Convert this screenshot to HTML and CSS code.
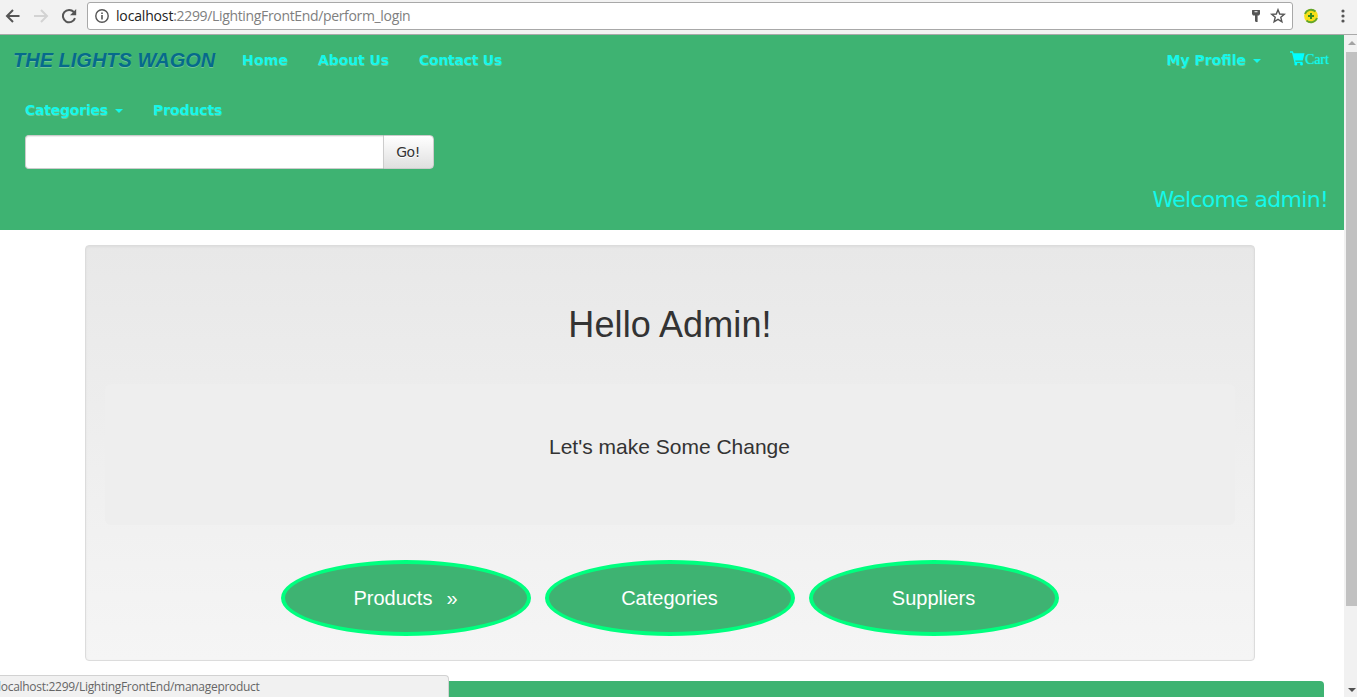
FILE: index.html
```html
<!DOCTYPE html>
<html lang="en">
<head>
<meta charset="utf-8">
<title>The Lights Wagon</title>
<link rel="stylesheet" href="styles.css">
</head>
<body>
<div class="toolbar">
  <svg class="tool back" width="16" height="16" viewBox="0 0 16 16"><path d="M14.5 8H2M8 2L2 8l6 6" fill="none" stroke="#555" stroke-width="2"/></svg>
  <svg class="tool forward" width="16" height="16" viewBox="0 0 16 16"><path d="M1 8h12.5M8 2l6 6-6 6" fill="none" stroke="#d3d3d3" stroke-width="2"/></svg>
  <svg class="tool reload" width="16" height="16" viewBox="0 0 16 16"><path d="M14 10.2A6.200 6.200 0 1 1 12.800 4" fill="none" stroke="#555" stroke-width="2"/><path d="M15.200 1v6.200H9z" fill="#555"/></svg>
  <div class="address">
    <svg class="info" width="14" height="14" viewBox="0 0 14 14"><circle cx="7" cy="7" r="6.2" fill="none" stroke="#555" stroke-width="1.4"/><path d="M6.2 6h1.6v4.5H6.2zM6.2 3.4h1.6V5H6.2z" fill="#555"/></svg>
    <span class="url"><b>localhost</b>:2299/LightingFrontEnd/perform_login</span>
    <svg class="key" width="10" height="14" viewBox="0 0 10 14"><path d="M1.5 1h7q.5 0 .5.5V5L8 6.500H6.600V13H5l-1-.8V6.500H2L1 5V1.500q0-.5.500-.5zM3.500 2.300v1h3v-1z" fill="#555" fill-rule="evenodd"/></svg>
    <svg class="star" width="16" height="16" viewBox="0 0 16 16"><path d="M8 1.700l1.700 4.300 4.600.3-3.500 3 1.100 4.500L8 11.300l-3.900 2.500 1.100-4.500-3.500-3 4.600-.3z" fill="none" stroke="#555" stroke-width="1.400"/></svg>
  </div>
  <svg class="extension" width="16" height="16" viewBox="0 0 16 16"><circle cx="8" cy="8" r="6.900" fill="#f7e018"/><path d="M2 6A6.500 6.500 0 0 1 12.500 3.500M14 10A6.500 6.500 0 0 1 3.500 12.500" fill="none" stroke="#62a52c" stroke-width="1.800"/><path d="M8 5v6M5 8h6" stroke="#398c20" stroke-width="2"/></svg>
  <svg class="more" width="4" height="14" viewBox="0 0 4 14"><g fill="#555"><circle cx="2" cy="2" r="1.600"/><circle cx="2" cy="7" r="1.600"/><circle cx="2" cy="12" r="1.600"/></g></svg>
</div>
<div class="viewport">
  <main class="page">
    <header class="navbar">
      <nav class="row">
        <a class="brand">THE LIGHTS WAGON</a>
        <a class="link home">Home</a>
        <a class="link about">About Us</a>
        <a class="link contact">Contact Us</a>
        <a class="link profile">My Profile<i class="caret"></i></a>
        <a class="cart"><svg class="cart-icon" width="15" height="15" viewBox="0 0 15 15"><path d="M0 .3h2.800l.8 1.900H14.500L12.800 9.500H5.200l.4 1.300H12.500V12H4.500L2 1.700H0z" fill="#0ff"/><circle cx="5.800" cy="13" r="1.500" fill="#0ff"/><circle cx="11.500" cy="13" r="1.500" fill="#0ff"/></svg>Cart</a>
      </nav>
      <nav class="row second">
        <a class="link categories">Categories<i class="caret"></i></a>
        <a class="link products">Products</a>
      </nav>
      <form class="search"><input class="field" type="text"><button class="go" type="button">Go!</button></form>
      <div class="welcome">Welcome admin!</div>
    </header>
    <section class="panel">
      <h1 class="title">Hello Admin!</h1>
      <div class="jumbo">Let's make Some Change</div>
      <div class="actions">
        <a class="oval"><span>Products</span><span class="raquo">»</span></a>
        <a class="oval">Categories</a>
        <a class="oval">Suppliers</a>
      </div>
    </section>
    <footer class="footer"></footer>
  </main>
  <div class="scrollbar"><i class="up"></i><i class="thumb"></i><i class="down"></i></div>
</div>
<div class="status">localhost:2299/LightingFrontEnd/manageproduct</div>
</body>
</html>
```
FILE: styles.css
```css
* { box-sizing: border-box; }
body { margin: 0; width: 1357px; height: 697px; overflow: hidden; background: #fff; font-family: "Liberation Sans", Arial, sans-serif; color: #333; }
svg { display: block; flex: none; }
.toolbar { display: flex; align-items: center; height: 35px; padding: 0 12px 3px 5px; background: #f2f2f2; border-bottom: 1px solid #a9a9a9; }
.forward { margin-left: 12px; }
.reload { margin-left: 12px; }
.address { display: flex; align-items: center; width: 1206px; height: 28px; margin-left: 10px; padding: 0 6px 0 7px; background: #fff; border: 1px solid #a8a8a8; border-radius: 3px; }
.url { margin-left: 7px; font: 14px/20px "Open Sans", sans-serif; letter-spacing: -.34px; color: #808080; white-space: nowrap; }
.url b { font-weight: 400; letter-spacing: -.16px; color: #222; }
.key { margin-left: auto; }
.star { margin-left: 9px; }
.extension { margin-left: 10px; }
.more { margin-left: auto; }
.viewport { display: flex; height: 662px; }
.page { flex: none; width: 1344px; overflow: hidden; }
.navbar { height: 195px; background: #3eb372; color: #14f8ea; }
.row { display: flex; align-items: center; height: 50px; padding: 0 15px 0 13px; }
.second { padding-left: 25px; }
.brand { width: 229px; font-size: 20px; font-weight: 700; font-style: italic; color: #066a8b; text-shadow: 0 1px 0 rgba(255,255,255,.25); white-space: nowrap; }
.link { font: 700 14px/20px "DejaVu Sans", Verdana, sans-serif; text-shadow: 0 1px 0 rgba(255,255,255,.25); white-space: nowrap; }
.home { width: 76px; letter-spacing: .2px; }
.about { width: 101px; letter-spacing: -.1px; }
.contact { letter-spacing: -.25px; }
.profile { margin-left: auto; }
.caret { display: inline-block; margin-left: 7px; vertical-align: middle; border: 4px solid transparent; border-top-color: currentColor; border-bottom: 0; }
.cart { display: flex; align-items: center; width: 39px; margin-left: 29px; font: 14px/20px "Liberation Serif", serif; letter-spacing: -.1px; text-shadow: 0 0 1px #14f8ea; }
.cart-icon { margin-top: -3px; }
.categories { width: 128px; letter-spacing: -.22px; }
.products { letter-spacing: -.1px; }
.search { display: flex; width: 409px; height: 34px; margin-left: 25px; }
.field { width: 358px; height: 34px; padding: 6px 12px; background: #fff; border: 1px solid #ccc; border-right: 0; border-radius: 4px 0 0 4px; box-shadow: inset 0 1px 1px rgba(0,0,0,.075); }
.go { width: 51px; height: 34px; padding: 0 1px 0 0; font: 14px/20px "DejaVu Sans", Verdana, sans-serif; letter-spacing: -.5px; color: #333; background: linear-gradient(#fff, #e0e0e0); border: 1px solid #ccc; border-radius: 0 4px 4px 0; text-shadow: 0 1px 0 #fff; }
.welcome { display: flex; justify-content: flex-end; align-items: center; height: 61px; padding: 1px 16px 0 0; font: 22px/30px "DejaVu Sans", Verdana, sans-serif; letter-spacing: -.7px; white-space: nowrap; }
.panel { width: 1170px; height: 416px; margin: 15px 0 0 85px; padding: 19px; border: 1px solid #dcdcdc; border-radius: 4px; background: linear-gradient(#e8e8e8, #f5f5f5); box-shadow: inset 0 1px 3px rgba(0,0,0,.05); text-align: center; }
.title { height: 119px; margin: 0; padding-top: 40px; font-size: 36px; font-weight: 400; line-height: 40px; letter-spacing: .1px; }
.jumbo { height: 141px; padding: 48px 1px 0 0; border-radius: 6px; background: #eee; font-size: 21px; line-height: 30px; }
.actions { display: flex; justify-content: center; gap: 14px; margin-top: 35px; }
.oval { display: flex; align-items: center; justify-content: center; width: 250px; height: 76px; padding-right: 1px; border: 4px solid #00ff7f; border-radius: 50%; background: #3eb372; color: #fff; font-size: 20px; }
.raquo { margin-left: 14px; }
.footer { width: 1304px; height: 30px; margin: 20px 0 0 20px; border-radius: 4px; background: #3eb372; }
.scrollbar { display: flex; flex-direction: column; align-items: flex-end; width: 13px; height: 662px; padding: 6px 0 5px; background: #f1f1f1; }
.up { width: 8px; margin-right: 1px; border: 4px solid transparent; border-bottom-color: #a3a3a3; border-top: 0; }
.thumb { width: 11px; height: 554px; margin-top: 7px; background: #c1c1c1; }
.down { width: 8px; margin: auto 1px 0 0; border: 4px solid transparent; border-top-color: #505050; border-bottom: 0; }
.status { position: absolute; left: 0; bottom: 0; width: 449px; height: 22px; border: 1px solid #d2d2d2; border-left: 0; border-bottom: 0; border-radius: 0 4px 0 0; background: #f1f1f1; color: #666; font: 12px/22px "Open Sans", sans-serif; letter-spacing: -.29px; text-indent: -2px; white-space: nowrap; overflow: hidden; }
```
